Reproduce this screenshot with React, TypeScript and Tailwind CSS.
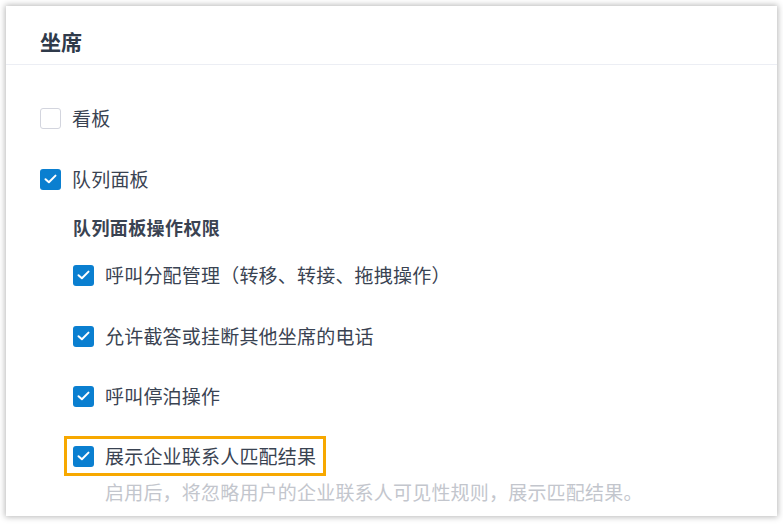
import React from 'react';

const font = { fontFamily: '"Noto Sans CJK SC", "Noto Sans", sans-serif' };

interface CheckProps {
  checked?: boolean;
}

// Square checkbox like the admin console ones
const Check: React.FC<CheckProps> = ({ checked = false }) => {
  if (!checked) {
    return <span className="block w-[21px] h-[21px] shrink-0 rounded-[3px] border border-[#d3d5de] bg-white" />;
  }
  return (
    <span className="flex w-[21px] h-[21px] shrink-0 items-center justify-center rounded-[3px] bg-[#0a7fd0]">
      <svg width="13" height="10" viewBox="0 0 13 10" fill="none">
        <path d="M1.5 5.2 L4.9 8.3 L11.5 1.6" stroke="#fff" strokeWidth="2" strokeLinecap="round" strokeLinejoin="round" />
      </svg>
    </span>
  );
};

interface RowProps {
  checked?: boolean;
  label: string;
  className?: string;
}

const Row: React.FC<RowProps> = ({ checked, label, className = '' }) => (
  <div className={`flex items-center h-[30px] gap-[11px] ${className}`}>
    <Check checked={checked} />
    <span className="text-[19px] leading-[30px] tracking-[0.2px] text-[#3a4352]">{label}</span>
  </div>
);

export default function App() {
  return (
    <div className="w-[783px] h-[524px] bg-white p-[6px] pb-[8px]" style={font}>
      <div className="h-full w-[771px] bg-white shadow-[0_0_6px_1px_rgba(0,0,0,0.28)] flex flex-col">
        {/* Header */}
        <div className="h-[59px] pt-[21px] pl-[34px] border-b border-[#eceef4]">
          <h2 className="text-[21px] leading-[28px] font-bold text-[#2f3a4a]">坐席</h2>
        </div>

        {/* Body */}
        <div className="flex flex-col pl-[34px] pt-[38px]">
          <Row label="看板" />
          <Row checked label="队列面板" className="mt-[31px]" />

          <div className="ml-[33px] flex flex-col">
            <div className="mt-[19px] h-[28px] text-[18px] leading-[28px] tracking-[0.4px] font-bold text-[#3a4352]">队列面板操作权限</div>
            <Row checked label="呼叫分配管理（转移、转接、拖拽操作）" className="mt-[19px]" />
            <Row checked label="允许截答或挂断其他坐席的电话" className="mt-[31px]" />
            <Row checked label="呼叫停泊操作" className="mt-[30px]" />

            <div className="-ml-[9px] mt-[25px] self-start border-[3px] border-[#f7a800] pl-[6px] pr-[7px] py-[2px]">
              <Row checked label="展示企业联系人匹配结果" />
            </div>
            <div className="ml-[32px] mt-[2px] text-[19px] leading-[28px] tracking-[0.2px] text-[#c3c6cd]">
              启用后，将忽略用户的企业联系人可见性规则，展示匹配结果。
            </div>
          </div>
        </div>
      </div>
    </div>
  );
}
